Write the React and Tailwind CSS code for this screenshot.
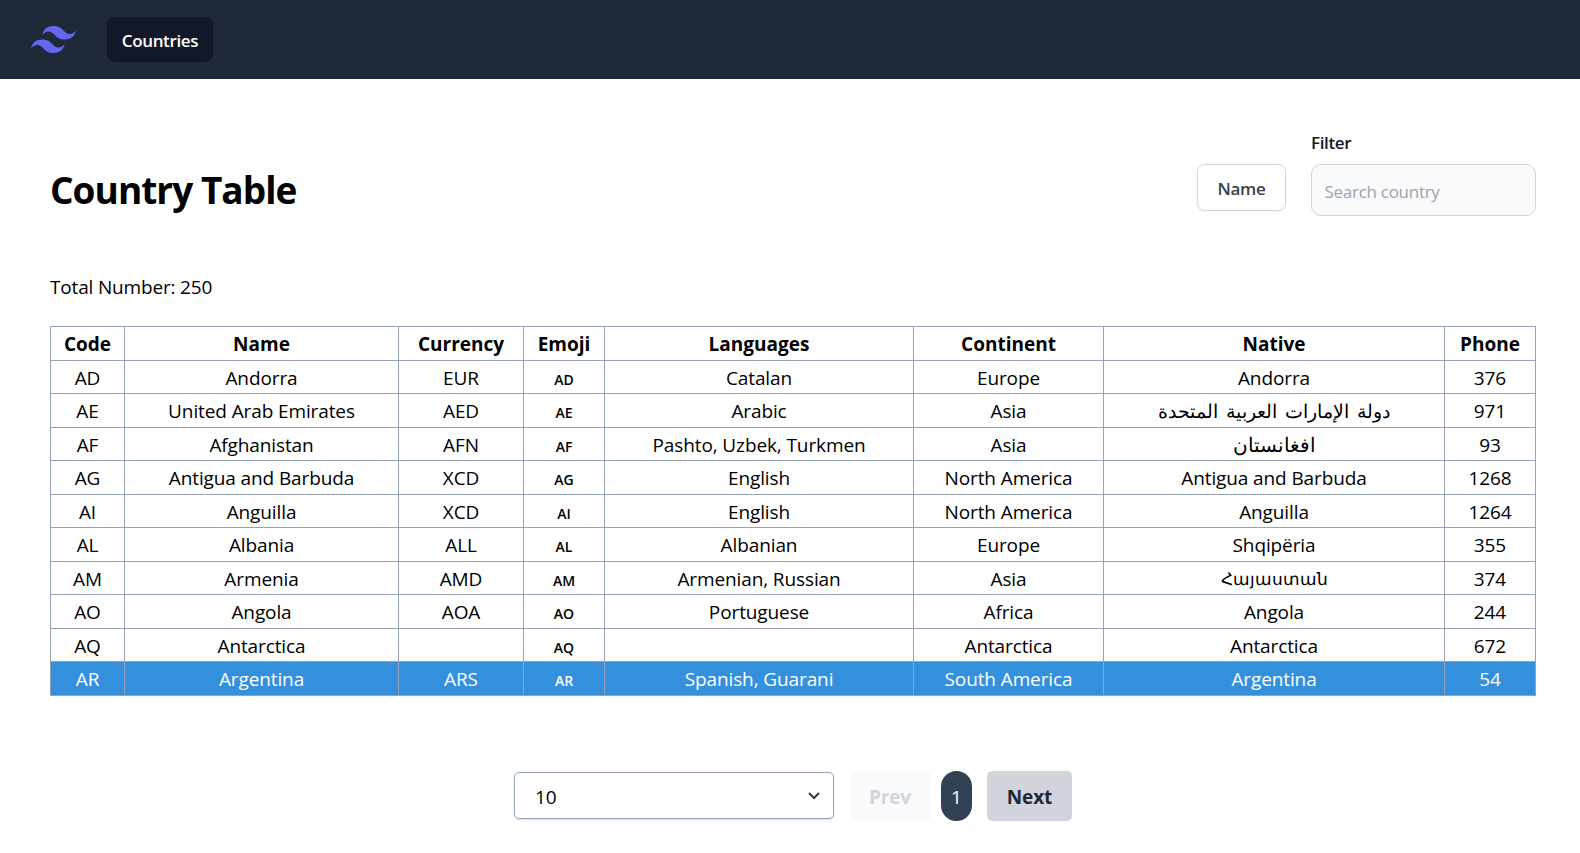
import React from "react";

const columns = [
  { label: "Code", width: "w-[74px]" },
  { label: "Name", width: "w-[274px]" },
  { label: "Currency", width: "w-[125px]" },
  { label: "Emoji", width: "w-[81px]" },
  { label: "Languages", width: "w-[309px]" },
  { label: "Continent", width: "w-[190px]" },
  { label: "Native", width: "w-[341px]" },
  { label: "Phone", width: "w-[91px]" },
];

const countries = [
  ["AD", "Andorra", "EUR", "AD", "Catalan", "Europe", "Andorra", "376"],
  ["AE", "United Arab Emirates", "AED", "AE", "Arabic", "Asia", "دولة الإمارات العربية المتحدة", "971"],
  ["AF", "Afghanistan", "AFN", "AF", "Pashto, Uzbek, Turkmen", "Asia", "افغانستان", "93"],
  ["AG", "Antigua and Barbuda", "XCD", "AG", "English", "North America", "Antigua and Barbuda", "1268"],
  ["AI", "Anguilla", "XCD", "AI", "English", "North America", "Anguilla", "1264"],
  ["AL", "Albania", "ALL", "AL", "Albanian", "Europe", "Shqipëria", "355"],
  ["AM", "Armenia", "AMD", "AM", "Armenian, Russian", "Asia", "Հայաստան", "374"],
  ["AO", "Angola", "AOA", "AO", "Portuguese", "Africa", "Angola", "244"],
  ["AQ", "Antarctica", "", "AQ", "", "Antarctica", "Antarctica", "672"],
  ["AR", "Argentina", "ARS", "AR", "Spanish, Guarani", "South America", "Argentina", "54"],
];

const nativeStyles = {
  AE: "text-[19px] tracking-normal [word-spacing:3px]",
  AF: "text-[19.6px] tracking-normal",
  AM: "text-[17.3px] tracking-normal",
};

function Logo() {
  return (
    <svg viewBox="0 0 54 33" className="h-[27.5px] w-[45px] fill-[#6366f1]">
      <path
        fillRule="evenodd"
        clipRule="evenodd"
        d="M27 0c-7.2 0-11.7 3.6-13.5 10.8 2.7-3.6 5.85-4.95 9.45-4.05 2.054.513 3.522 2.004 5.147 3.653C30.744 13.09 33.808 16.2 40.5 16.2c7.2 0 11.7-3.6 13.5-10.8-2.7 3.6-5.85 4.95-9.45 4.05-2.054-.513-3.522-2.004-5.147-3.653C36.756 3.11 33.692 0 27 0zM13.5 16.2C6.3 16.2 1.8 19.8 0 27c2.7-3.6 5.85-4.95 9.45-4.05 2.054.514 3.522 2.004 5.147 3.653C17.244 29.29 20.308 32.4 27 32.4c7.2 0 11.7-3.6 13.5-10.8-2.7 3.6-5.85 4.95-9.45 4.05-2.054-.513-3.522-2.004-5.147-3.653C23.256 19.31 20.192 16.2 13.5 16.2z"
      />
    </svg>
  );
}

function Cell({ row, index }) {
  if (index === 3) {
    return <span className="relative top-[1px] text-[14px] font-semibold tracking-normal">{row[3]}</span>;
  }
  if (index === 6 && nativeStyles[row[0]]) {
    return <span className={nativeStyles[row[0]]}>{row[6]}</span>;
  }
  return row[index];
}

function CountryTable() {
  return (
    <table className="w-[1486px] table-fixed border-separate border-spacing-0 border-t border-l border-[#94a3b8] text-center text-[19px] leading-[26px] tracking-[-0.11px]">
      <thead>
        <tr className="h-[34px]">
          {columns.map((c) => (
            <th key={c.label} className={`${c.width} border-r border-b border-[#94a3b8] p-0 font-bold tracking-normal`}>
              {c.label}
            </th>
          ))}
        </tr>
      </thead>
      <tbody>
        {countries.map((row, r) => (
          <tr
            key={row[0]}
            className={`${r % 2 ? "h-[34px]" : "h-[33px]"} ${r === 9 ? "bg-[#3490dc] text-white" : ""}`}
          >
            {row.map((value, i) => (
              <td
                key={i}
                className={`${r % 2 ? "pt-0" : "pt-[1px]"} border-r border-b border-[#94a3b8] px-0 pb-0 leading-[26px] whitespace-nowrap`}
              >
                <Cell row={row} index={i} />
              </td>
            ))}
          </tr>
        ))}
      </tbody>
    </table>
  );
}

export default function App() {
  return (
    <div className="h-[853px] w-[1580px] overflow-hidden bg-white font-['Open_Sans','Noto_Sans',sans-serif] text-black">
      <nav className="flex h-[79px] items-center bg-[#1f2937] pl-[31px]">
        <Logo />
        <a className="ml-[31px] flex h-[45px] w-[106px] items-center justify-center rounded-[7.5px] bg-[#111827] pt-[2px] text-[17px] font-semibold tracking-[-0.35px] text-white">
          Countries
        </a>
      </nav>
      <main className="pl-[50px]">
        <div className="flex h-[183px] w-[1486px] justify-between">
          <h1 className="pt-[86px] text-[37px] leading-[50px] font-bold tracking-[-0.97px]">Country Table</h1>
          <div className="flex gap-[25px]">
            <button className="mt-[85px] h-[47px] w-[89px] rounded-[7.5px] border border-[#d1d5db] bg-white pt-[2px] text-[17px] font-semibold tracking-[-0.3px] text-[#374151] shadow-xs">
              Name
            </button>
            <div className="pt-[51px]">
              <label className="block h-[34px] text-[17px] leading-[25px] font-semibold tracking-[-0.35px] text-[#111827]">Filter</label>
              <input
                placeholder="Search country"
                className="block h-[52px] w-[225px] rounded-[10px] border border-[#d1d5db] bg-[#f9fafb] pt-[3px] pl-[12.5px] text-[17px] tracking-[-0.28px] placeholder:text-[#9ca3af]"
              />
            </div>
          </div>
        </div>
        <p className="h-[64px] pt-[12px] text-[19px] leading-[26px] tracking-[-0.17px]">Total Number: 250</p>
        <CountryTable />
        <div className="flex pt-[75px] pl-[464px]">
          <div className="mt-[1px] flex h-[47px] w-[320px] items-center justify-between rounded-[5px] border border-[#94a3b8] pr-[13px] pl-[20px] text-[19px] shadow-sm">
            <span className="pt-[3px]">10</span>
            <svg viewBox="0 0 12 8" className="h-[8px] w-[12px] fill-none stroke-[#2d3748] stroke-2">
              <path d="M1 1l5 5 5-5" />
            </svg>
          </div>
          <button className="ml-[15px] h-[50px] w-[82px] rounded-[5px] bg-[#f9fafb] pt-[2px] text-[19px] font-bold tracking-[-0.1px] text-[#d1d5db]">
            Prev
          </button>
          <span className="ml-[10px] flex h-[50px] w-[31px] items-center justify-center rounded-full bg-[#334155] pt-[2px] text-[19px] text-white">
            1
          </span>
          <button className="ml-[15px] h-[50px] w-[85px] rounded-[5px] bg-[#d1d5db] pt-[2px] text-[19px] font-bold tracking-[-0.1px] text-[#1f2937]">
            Next
          </button>
        </div>
      </main>
    </div>
  );
}
